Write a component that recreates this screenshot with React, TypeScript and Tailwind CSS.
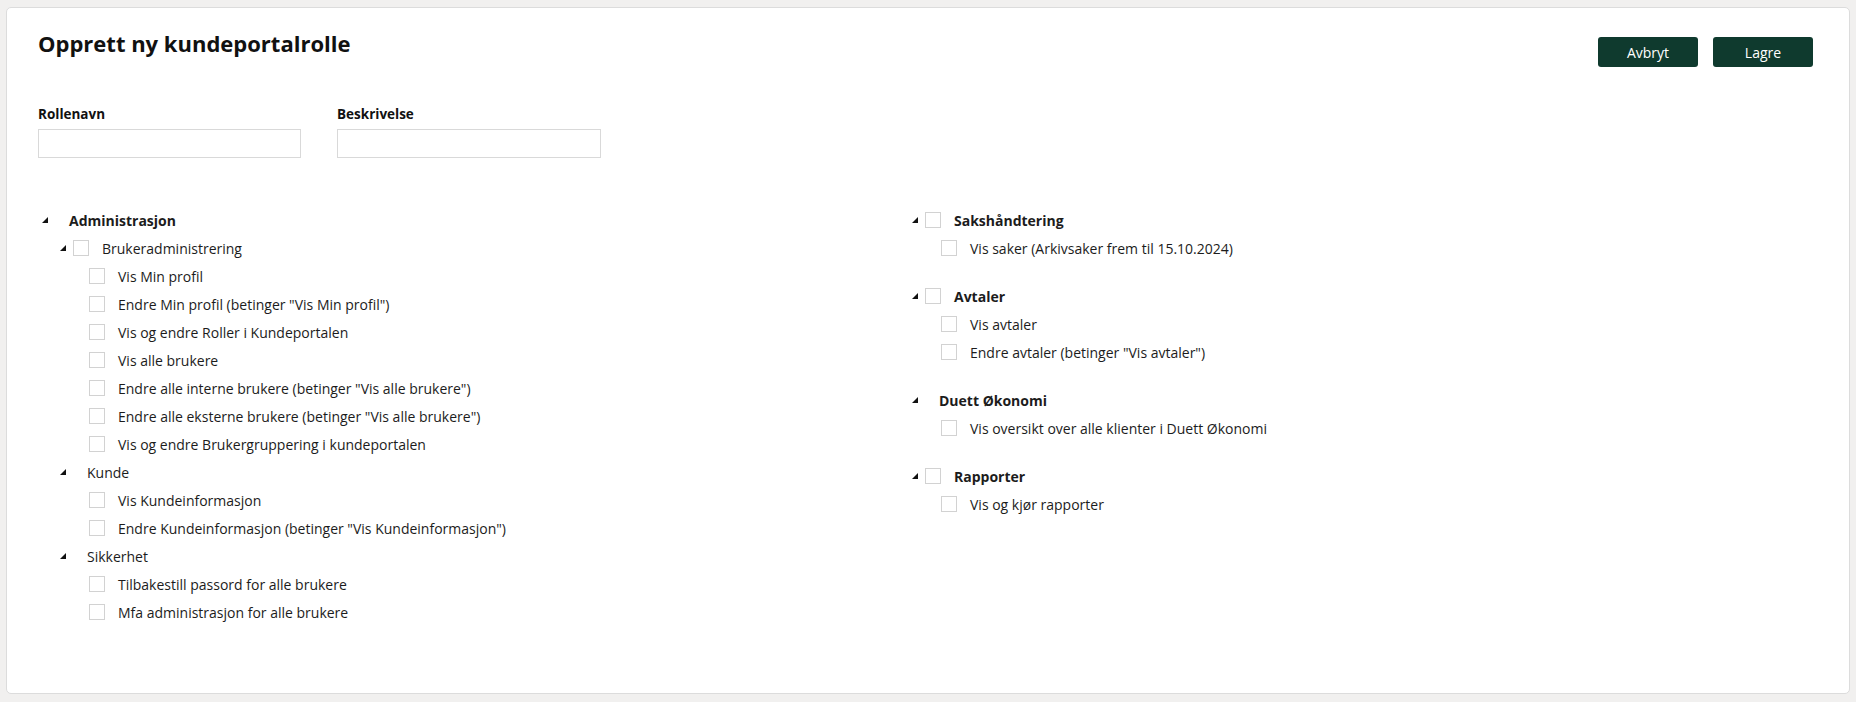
import React from 'react'

type Node = {
  label: string
  bold?: boolean
  checkbox?: boolean
  children?: Node[]
}

const leftTree: Node[] = [
  {
    label: 'Administrasjon',
    bold: true,
    children: [
      {
        label: 'Brukeradministrering',
        checkbox: true,
        children: [
          { label: 'Vis Min profil', checkbox: true },
          { label: 'Endre Min profil (betinger "Vis Min profil")', checkbox: true },
          { label: 'Vis og endre Roller i Kundeportalen', checkbox: true },
          { label: 'Vis alle brukere', checkbox: true },
          { label: 'Endre alle interne brukere (betinger "Vis alle brukere")', checkbox: true },
          { label: 'Endre alle eksterne brukere (betinger "Vis alle brukere")', checkbox: true },
          { label: 'Vis og endre Brukergruppering i kundeportalen', checkbox: true },
        ],
      },
      {
        label: 'Kunde',
        children: [
          { label: 'Vis Kundeinformasjon', checkbox: true },
          { label: 'Endre Kundeinformasjon (betinger "Vis Kundeinformasjon")', checkbox: true },
        ],
      },
      {
        label: 'Sikkerhet',
        children: [
          { label: 'Tilbakestill passord for alle brukere', checkbox: true },
          { label: 'Mfa administrasjon for alle brukere', checkbox: true },
        ],
      },
    ],
  },
]

const rightTree: Node[] = [
  {
    label: 'Sakshåndtering',
    bold: true,
    checkbox: true,
    children: [{ label: 'Vis saker (Arkivsaker frem til 15.10.2024)', checkbox: true }],
  },
  {
    label: 'Avtaler',
    bold: true,
    checkbox: true,
    children: [
      { label: 'Vis avtaler', checkbox: true },
      { label: 'Endre avtaler (betinger "Vis avtaler")', checkbox: true },
    ],
  },
  {
    label: 'Duett Økonomi',
    bold: true,
    children: [{ label: 'Vis oversikt over alle klienter i Duett Økonomi', checkbox: true }],
  },
  {
    label: 'Rapporter',
    bold: true,
    checkbox: true,
    children: [{ label: 'Vis og kjør rapporter', checkbox: true }],
  },
]

function Checkbox() {
  return <span className="block w-[16px] h-[16px] shrink-0 border border-[#d2d2d2] bg-white" />
}

function Arrow() {
  return (
    <svg width="6" height="6" viewBox="0 0 6 6" className="block shrink-0">
      <polygon points="6,0 6,6 0,6" fill="#111" />
    </svg>
  )
}

function TreeNode({ node, level }: { node: Node; level: number }) {
  const hasChildren = !!node.children && node.children.length > 0
  return (
    <li>
      <div className="flex items-center h-[28px]" style={{ paddingLeft: level * 18 }}>
        {hasChildren ? (
          <span className="w-[13px] shrink-0 flex items-center">
            <Arrow />
          </span>
        ) : (
          <span className="w-[11px] shrink-0" />
        )}
        {node.checkbox ? (
          <>
            <Checkbox />
            <span className={`ml-[13px] whitespace-nowrap ${node.bold ? 'font-bold' : ''}`}>{node.label}</span>
          </>
        ) : (
          <span className={`ml-[14px] whitespace-nowrap ${node.bold ? 'font-bold' : ''}`}>{node.label}</span>
        )}
      </div>
      {hasChildren && (
        <ul>
          {node.children!.map((c) => (
            <TreeNode key={c.label} node={c} level={level + 1} />
          ))}
        </ul>
      )}
    </li>
  )
}

export default function App() {
  return (
    <div className="min-h-screen bg-[#f1f0ef] pt-[7px] px-[6px] pb-[8px] text-[#1c1c1c] font-['Open_Sans',sans-serif]">
      <div className="h-[687px] bg-white border border-[#dcdcdc] rounded-[5px] pl-[31px] pr-[36px] pt-[20px]">
        <div className="flex items-start justify-between h-[30px]">
          <h1 className="text-[22px] leading-[30px] font-bold text-[#111]">Opprett ny kundeportalrolle</h1>
          <div className="flex gap-[15px] mt-[9px]">
            <button className="w-[100px] h-[30px] rounded-[3px] bg-[#0f3a2e] text-white text-[14px]">Avbryt</button>
            <button className="w-[100px] h-[30px] rounded-[3px] bg-[#0f3a2e] text-white text-[14px]">Lagre</button>
          </div>
        </div>

        <div className="flex gap-[36px] mt-[48px]">
          <div>
            <label className="block text-[13.5px] leading-[16px] font-bold text-[#111]">Rollenavn</label>
            <input className="mt-[7px] block w-[263px] h-[29px] border border-[#d9d9d9] outline-none px-2 text-[14px]" />
          </div>
          <div>
            <label className="block text-[13.5px] leading-[16px] font-bold text-[#111]">Beskrivelse</label>
            <input className="mt-[7px] block w-[264px] h-[29px] border border-[#d9d9d9] outline-none px-2 text-[14px]" />
          </div>
        </div>

        <div className="grid grid-cols-[870px_1fr] mt-[48px] text-[14px]">
          <ul className="pl-[4px]">
            {leftTree.map((n) => (
              <TreeNode key={n.label} node={n} level={0} />
            ))}
          </ul>
          <ul className="pl-[4px] flex flex-col gap-[20px]">
            {rightTree.map((n) => (
              <TreeNode key={n.label} node={n} level={0} />
            ))}
          </ul>
        </div>
      </div>
    </div>
  )
}
